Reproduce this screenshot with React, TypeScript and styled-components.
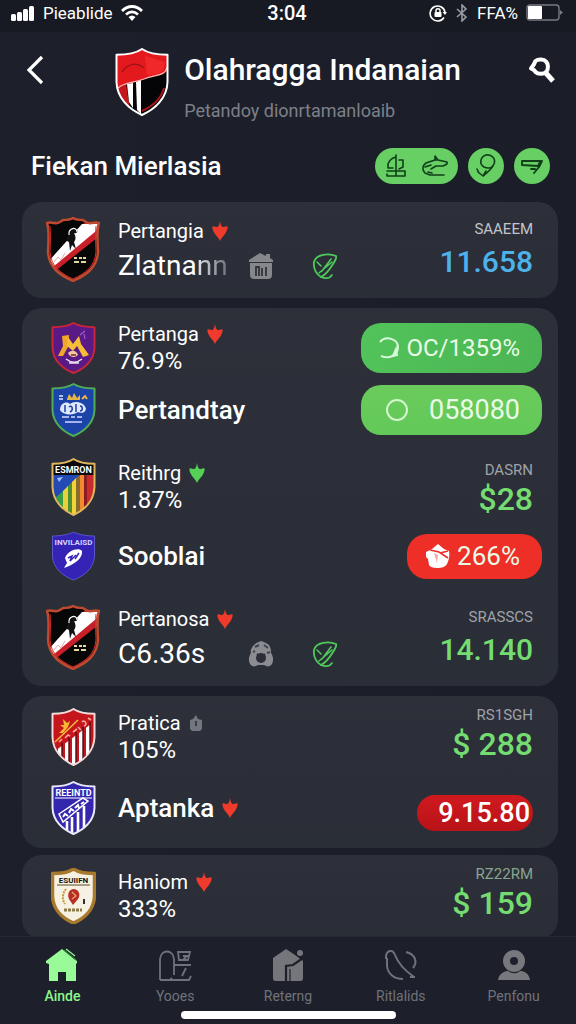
import React, { useId } from 'react';
import styled, { createGlobalStyle, css } from 'styled-components';

const GlobalStyle = createGlobalStyle`
  *, *::before, *::after { box-sizing: border-box; }
  body {
    margin: 0;
    background: #1c1f2a;
    color: #fff;
    font-family: Roboto, "Liberation Sans", sans-serif;
  }
  button { font: inherit; color: inherit; border: 0; padding: 0; background: none; cursor: pointer; }
  h1, h2, p { margin: 0; }
  svg { display: block; flex: none; }
`;

/* ---------- page frame ---------- */

const Screen = styled.div`
  display: flex;
  flex-direction: column;
  height: 100vh;
  background: linear-gradient(90deg, #1d202b, #1b1e28);
`;

const StatusBar = styled.div`
  display: grid;
  grid-template-columns: 1fr auto 1fr;
  align-items: center;
  height: 32px;
  padding: 0 13px 6px 11px;
  background: #171a23;
  font-size: 17px;
  line-height: 24px;
`;

const StatusGroup = styled.div<{ $end?: boolean }>`
  display: flex;
  align-items: center;
  gap: 8px;
  justify-content: ${(p) => (p.$end ? 'flex-end' : 'flex-start')};
`;

const Clock = styled.time`
  font-size: 20px;
  font-weight: 500;
`;

const Header = styled.header`
  display: flex;
  align-items: flex-start;
  padding: 16px 13px 24px;
`;

const HeaderButton = styled.button`
  display: flex;
  align-items: center;
  justify-content: center;
  width: 44px;
  height: 44px;
`;

const Brand = styled.div`
  display: flex;
  flex: 1;
  justify-content: center;
  gap: 15px;
`;

const Title = styled.h1`
  font-size: 30px;
  line-height: 44px;
  font-weight: 500;
  white-space: nowrap;
`;

const Subtitle = styled.p`
  padding-top: 6px;
  font-size: 18px;
  line-height: 26px;
  color: #7d8089;
  white-space: nowrap;
`;

const SectionBar = styled.div`
  display: flex;
  align-items: center;
  justify-content: space-between;
  height: 36px;
  margin: 0 26px 18px 31px;
`;

const SectionTitle = styled.h2`
  font-size: 26px;
  line-height: 36px;
  font-weight: 500;
`;

const Chips = styled.div`
  display: flex;
  gap: 10px;
`;

const Chip = styled.button<{ $wide?: boolean }>`
  display: flex;
  align-items: center;
  justify-content: center;
  gap: 14px;
  width: ${(p) => (p.$wide ? 83 : 36)}px;
  height: 36px;
  border-radius: 18px;
  background: #67cf63;
`;

/* ---------- cards ---------- */

const List = styled.main`
  flex: 1;
  min-height: 0;
  overflow-y: auto;
  scrollbar-width: none;
  display: flex;
  flex-direction: column;
  gap: 10px;
  padding: 0 18px 0 22px;
`;

const Card = styled.section<{ $compact?: boolean; $tight?: boolean }>`
  flex: none;
  padding: ${(p) => (p.$compact ? '12px 16px 14px 24px' : '14px 16px 16px 24px')};
  border-radius: 20px;
  background: linear-gradient(180deg, #2d2f39, #2a2e37);
  margin-top: ${(p) => (p.$tight ? -3 : 0)}px;
`;

const Row = styled.article<{ $height: number; $space?: number }>`
  display: grid;
  grid-template-columns: 54px 1fr auto;
  grid-template-rows: 100%;
  column-gap: 18px;
  align-items: center;
  height: ${(p) => p.$height}px;
  margin-top: ${(p) => p.$space ?? 0}px;
`;

const CrestCell = styled.div`
  display: flex;
  justify-content: center;
`;

const Info = styled.div<{ $loose?: boolean }>`
  display: flex;
  flex-direction: column;
  gap: ${(p) => (p.$loose ? 7 : 0)}px;
`;

const Line = styled.div`
  display: flex;
  align-items: center;
`;

const Label = styled.span`
  margin-right: 8px;
  font-size: 20px;
  line-height: 26px;
`;

const Figure = styled.span`
  font-size: 24px;
  line-height: 28px;
`;

const Name = styled.span`
  margin-right: 8px;
  font-size: 26px;
  line-height: 30px;
  font-weight: 500;
`;

const Score = styled.span`
  width: 129px;
  font-size: 28px;
  line-height: 30px;
`;

const Faded = styled.span`
  background: linear-gradient(90deg, #e4e5e8, #6b6e77);
  background-clip: text;
  color: transparent;
`;

const RowActions = styled.div`
  display: flex;
  gap: 36px;
`;

const IconButton = styled.button`
  display: flex;
  align-items: center;
  justify-content: center;
  width: 28px;
  height: 28px;
`;

type AmountKind = 'large' | 'plain' | 'raised';

const amountLift: Record<AmountKind, number> = { large: 2, plain: 0, raised: 10 };

const Amount = styled.div<{ $kind: AmountKind }>`
  display: flex;
  flex-direction: column;
  align-items: flex-end;
  gap: ${(p) => (p.$kind === 'large' ? 4 : 0)}px;
  padding: 0 9px ${(p) => amountLift[p.$kind]}px 0;
`;

const Code = styled.span<{ $tone?: string }>`
  font-size: 15px;
  line-height: 24px;
  color: ${(p) => p.$tone ?? '#a0a2a9'};
`;

const Value = styled.span<{ $blue?: boolean; $large?: boolean }>`
  font-size: ${(p) => (p.$large ? 30 : 32)}px;
  line-height: 34px;
  font-weight: 500;
  color: ${(p) => (p.$blue ? '#4db2ea' : '#74dc70')};
`;

const tones = {
  green: css`background: linear-gradient(100deg, #52c35a, #4bb553);`,
  lime: css`background: linear-gradient(180deg, #6acb5c, #62c958);`,
  red: css`background: #ee2f27;`,
};

const pillText = { green: 24, lime: 27, red: 26 };

const Pill = styled.button<{ $tone: keyof typeof tones; $small?: boolean }>`
  display: flex;
  align-items: center;
  justify-content: flex-end;
  gap: ${(p) => (p.$tone === 'lime' ? 20 : 6)}px;
  width: ${(p) => (p.$small ? 135 : 181)}px;
  height: ${(p) => (p.$small ? 45 : 50)}px;
  padding-right: 22px;
  border-radius: 20px;
  font-size: ${(p) => pillText[p.$tone]}px;
  color: #e9fbe6;
  ${(p) => tones[p.$tone]}
`;

const Tag = styled.button`
  width: 116px;
  height: 36px;
  margin: 10px 9px 0 0;
  padding-right: 3px;
  border-radius: 18px;
  background: linear-gradient(180deg, #d0191f, #b81318);
  font-size: 27px;
  line-height: 36px;
  font-weight: 500;
  text-align: right;
`;

/* ---------- bottom navigation ---------- */

const BottomNav = styled.nav`
  padding: 10px 6px 5px;
  background: #1d202b;
  border-top: 1px solid #252833;
`;

const Tabs = styled.div`
  display: grid;
  grid-template-columns: repeat(5, 1fr);
`;

const Tab = styled.a<{ $active?: boolean }>`
  display: flex;
  flex-direction: column;
  align-items: center;
  gap: 4px;
  font-size: 14px;
  line-height: 18px;
  text-decoration: none;
  font-weight: ${(p) => (p.$active ? 500 : 400)};
  color: ${(p) => (p.$active ? '#8df58a' : '#70727a')};
`;

const HomeIndicator = styled.div`
  width: 215px;
  height: 8px;
  margin: 6px auto 0;
  border-radius: 4px;
  background: #fff;
`;

/* ---------- crests ---------- */

const shield = (w: number, h: number) =>
  `M${w / 2} 1 C${w * 0.4} ${h * 0.07} ${w * 0.2} ${h * 0.1} 1.5 ${h * 0.1}` +
  ` L1.5 ${h * 0.5} C2 ${h * 0.74} ${w * 0.26} ${h * 0.9} ${w / 2} ${h - 1}` +
  ` C${w * 0.74} ${h * 0.9} ${w - 2} ${h * 0.74} ${w - 1.5} ${h * 0.5}` +
  ` L${w - 1.5} ${h * 0.1} C${w * 0.8} ${h * 0.1} ${w * 0.6} ${h * 0.07} ${w / 2} 1Z`;

const ornate =
  'M27 2 C24 4 20 4 17 4 C14 6 12 8 9 7 C6 7 4 6 1 7 C3 12 3 20 2 36 C3 52 14 59 27 65 C40 59 51 52 52 36 C51 20 51 12 53 7 C50 6 48 7 45 7 C42 8 40 6 37 4 C34 4 30 4 27 2Z';

interface CrestProps {
  w: number;
  h: number;
  edge: string;
  fill: string;
  path?: string;
  stroke?: number;
  children?: React.ReactNode;
}

function Crest({ w, h, edge, fill, path, stroke = 2, children }: CrestProps) {
  const id = useId();
  const d = path ?? shield(w, h);
  return (
    <svg width={w} height={h} viewBox={`0 0 ${w} ${h}`} aria-hidden="true">
      <clipPath id={id}>
        <path d={d} />
      </clipPath>
      <path d={d} fill={fill} />
      <g clipPath={`url(#${id})`}>{children}</g>
      <path d={d} fill="none" stroke={edge} strokeWidth={stroke} strokeLinejoin="round" />
    </svg>
  );
}

const LeagueCrest = () => (
  <Crest w={54} h={68} edge="#fff" fill="#050507">
    <path d="M0 0H54V21C48 30 38 26 27 32C18 36 8 34 0 42Z" fill="#e3191d" />
    <path d="M30 8L50 14L48 22C44 27 38 26 32 27Z" fill="#f0282a" />
    <path d="M7 24C13 15 22 14 29 20" fill="none" stroke="#a31216" strokeWidth="1.5" />
    <path d="M2 40L11 36L16 68L8 60Z" fill="#c5181c" />
    <path d="M12 36L18 35V60L14 54Z" fill="#fff" />
    <path d="M21 34L26 32V66L22 62Z" fill="#fff" />
    <path d="M3 40C9 34 19 35 29 31C40 26 50 29 52 19" fill="none" stroke="#ffb9b4" strokeWidth="1.2" />
    <path d="M27 63C38 58 46 51 49 40" fill="none" stroke="#a5161a" strokeWidth="2" />
  </Crest>
);

const StripeCrest = () => (
  <Crest w={54} h={66} edge="#c04a2f" fill="#080708" path={ornate} stroke={2.5}>
    <path d="M0 48L42 3L56 4V18L8 56Z" fill="#c81f28" />
    <path d="M2 46L36 8L52 8L50 15L7 51Z" fill="#fff" />
    <path d="M22 20C22 14 26 11 30 13C33 15 31 18 28 17C30 21 30 23 28 26L30 33L26 29L24 35L23 26C20 25 19 23 22 20Z" fill="#111" />
    <path d="M23 19C22 12 31 10 31 16" fill="none" stroke="#fff" strokeWidth="1.2" />
    <path d="M8 46L12 41L15 44L19 37" fill="none" stroke="#e9aaae" strokeWidth="1" />
    <path d="M28 42H31M33 42H36M37 42H40M28 46H33M35 46H40" stroke="#e5d9a0" strokeWidth="2" />
    <path d="M4 10C5 22 4 30 4 36C5 50 14 57 27 63C40 57 49 50 50 36C50 30 49 22 50 10" fill="none" stroke="#e02a2c" strokeWidth="1" />
  </Crest>
);

const PurpleCrest = () => (
  <Crest w={45} h={52} edge="#c9243a" fill="#5a1a85">
    <path d="M11 14L18 13L17 25L12 34L7 34L12 24Z" fill="#f0a72a" />
    <path d="M17 15L22 22L28 14L30 22L38 33L32 35L26 24L22 29L16 24Z" fill="#f6bd36" />
    <path d="M29 13L34 9M34 17L33 12" stroke="#a45ad0" strokeWidth="1.2" />
    <path d="M17 31C21 27 26 29 27 33C24 36 19 36 17 31Z" fill="#f3c7a0" />
    <path d="M15 37C20 41 26 41 31 37M18 41H28" fill="none" stroke="#e8ddf0" strokeWidth="1.5" />
    <path d="M20 33H25" stroke="#7a2430" strokeWidth="1.5" />
  </Crest>
);

const BlueCrest = () => (
  <Crest w={45} h={54} edge="#4fae55" fill="#1c43a8">
    <path d="M8 13H12M8 16H12" stroke="#dfe8ff" strokeWidth="1.6" />
    <path d="M16 16L18 11L21 15L23 10L26 15L29 12L29 17H16Z" fill="#e7b448" />
    <path d="M31 16L34 13L36 16" fill="none" stroke="#e7b448" strokeWidth="2" />
    <path d="M9 27C9 19 17 18 19 21C23 17 34 19 35 26C34 31 29 30 27 29C22 33 12 32 9 27Z" fill="#dfe7fb" />
    <path d="M14 22V29M18 24C21 21 23 27 19 29M25 21V29M29 23C32 23 32 28 29 28" fill="none" stroke="#1c43a8" strokeWidth="1.5" />
    <path d="M11 34H18M20 34H24M26 34H31M14 39H31" stroke="#cfdcff" strokeWidth="1.6" />
  </Crest>
);

const RainbowCrest = () => (
  <Crest w={45} h={58} edge="#e0b65c" fill="#c92c2c">
    <path d="M0 17H30L0 46Z" fill="#2349b4" />
    <path d="M0 44L12 33V60H0Z" fill="#3b9c48" />
    <path d="M12 33L17 28V60H12Z" fill="#e8d23c" />
    <path d="M17 28L21 24V60H17Z" fill="#4f8e34" />
    <path d="M21 24L25 20V60H21Z" fill="#f1d43a" />
    <path d="M25 20L29 17V60H25Z" fill="#8a6a2a" />
    <path d="M29 17H33V60H29Z" fill="#f08a2c" />
    <path d="M33 17H36V60H33Z" fill="#8b1c24" />
    <path d="M6 20L12 19L8 24Z" fill="#9fc0ff" />
    <path d="M0 0H45V17H0Z" fill="#0a0a0c" />
    <text x="22.5" y="15" textAnchor="middle" fontSize="9" fontWeight="700" fill="#fff">ESMRON</text>
  </Crest>
);

const IndigoCrest = () => (
  <Crest w={45} h={50} edge="#5a58c8" fill="#3423b4" stroke={1}>
    <text x="22.5" y="14" textAnchor="middle" fontSize="8" fontWeight="700" fill="#d6d4ff">INVILAISD</text>
    <path d="M14 27C17 19 28 16 31 20C32 27 24 33 13 37L16 32Z" fill="#fff" />
    <path d="M17 27L21 25L19 30L25 24M24 28L28 22" fill="none" stroke="#3423b4" strokeWidth="1.5" />
  </Crest>
);

const RedCrest = () => (
  <Crest w={45} h={58} edge="#f3dada" fill="#c5161d">
    {[7, 14, 21, 28, 35].map((x) => (
      <path key={x} d={`M${x} ${46 - x * 0.75}L${x + 4} ${43 - x * 0.75}V60H${x}Z`} fill="#fff" />
    ))}
    {[11, 18, 25, 32, 39].map((x) => (
      <path key={x} d={`M${x} ${43 - x * 0.75}V60`} stroke="#4a0c12" strokeWidth="1.4" />
    ))}
    <path d="M4 34L27 12" stroke="#f5bb3b" strokeWidth="1.5" />
    <path d="M8 25L13 20L9 17L13 17L12 11L16 15L19 13L17 19L12 25Z" fill="#f7b733" />
    <path d="M8 34L11 31M14 30L17 27L19 28M22 24L26 21M27 19L30 22M31 14C34 11 37 17 33 18M37 10L40 12" fill="none" stroke="#ffa39a" strokeWidth="1.6" />
  </Crest>
);

const NavyCrest = () => (
  <Crest w={45} h={54} edge="#e9e9fb" fill="#3427ae">
    <path d="M16 40V54M21 36V54M27 31V54M33 25V48" stroke="#fff" strokeWidth="2.6" />
    <path d="M8 33L32 17L37 20L12 41Z" fill="#3427ae" stroke="#fff" strokeWidth="1.5" />
    <path d="M12 36L14 33L17 35M18 32L20 28L23 30M24 27L27 24L28 27M30 23L33 21" fill="none" stroke="#fff" strokeWidth="2" />
    <path d="M4 17H41" stroke="#fff" strokeWidth="1.2" />
    <text x="22.5" y="15" textAnchor="middle" fontSize="9" fontWeight="700" fill="#fff">REEINTD</text>
  </Crest>
);

const GoldCrest = () => (
  <Crest w={45} h={56} edge="#a87a2d" fill="#f6f1e2" stroke={3.5}>
    <path d="M6 17H39" stroke="#5c4a28" strokeWidth="1.2" />
    <text x="22.5" y="15" textAnchor="middle" fontSize="8" fontWeight="700" fill="#151210">ESUIIFN</text>
    <path d="M22 21C28 21 30 27 27 31L22 37L18 31C16 26 18 22 22 21Z" fill="#b52f26" />
    <path d="M21 24L25 28L21 31" fill="none" stroke="#f1a36a" strokeWidth="1.2" />
    <path d="M15 21C11 26 11 32 14 36" fill="none" stroke="#c9963a" strokeWidth="2" strokeDasharray="2 1" />
    <path d="M33 31V36" stroke="#333" strokeWidth="2" />
    <path d="M13 42H31" stroke="#8c7a48" strokeWidth="3" strokeDasharray="3 1" />
  </Crest>
);

/* ---------- icons ---------- */

const Drop = ({ color = '#f03a2b' }: { color?: string }) => (
  <svg width="16" height="22" viewBox="0 0 16 22" aria-hidden="true">
    <path d="M8 1C8.500 4 9 6 10.500 7C12 7.500 14 5.500 15.500 6.500C16 8 15 11 13 14C11.500 16 9 18 8 21C7 18 4.500 16 3 14C1 11 0 8 .5 6.500C2 5.500 4 7.500 5.500 7C7 6 7.500 4 8 1Z" fill={color} />
  </svg>
);

const MiniCup = () => (
  <svg width="14" height="18" viewBox="0 0 14 18" aria-hidden="true">
    <path d="M1 6L4 5L7 1L9 5L13 6V15L11 17H3L1 15Z" fill="#73767f" />
    <path d="M6 7H8V12H6Z" fill="#3a3d46" />
  </svg>
);

const BasketIcon = () => (
  <svg width="26" height="28" viewBox="0 0 26 28" aria-hidden="true">
    <path d="M1 8L12 1L18 4V2H22V6L25 8V10H1Z" fill="#85878d" />
    <path d="M2 11H24V23C24 26 22 27 20 27H6C4 27 2 26 2 23Z" fill="#85878d" />
    <path d="M8 24V15H11V24M14 16V24M18 24V15" fill="none" stroke="#30333c" strokeWidth="1.800" />
  </svg>
);

const BallIcon = () => (
  <svg width="26" height="28" viewBox="0 0 26 28" aria-hidden="true">
    <path d="M6 5C9 2 11 2 13 1C16 2 19 3 21 5C23 8 23 11 23 13C25 16 26 20 24 24C22 27 19 27 16 25H10C7 27 4 27 2 24C0 20 1 16 3 13C2 10 4 7 6 5Z" fill="#8a8c92" />
    <path d="M7 7L11 5M16 5L20 8M5 12L7 11M19 13L22 12" stroke="#41444d" strokeWidth="2" />
    <circle cx="13" cy="18" r="5" fill="#2b2e38" />
    <path d="M9 14L11 16M17 14L15 16" stroke="#2b2e38" strokeWidth="2" />
  </svg>
);

const LeafIcon = () => (
  <svg width="26" height="26" viewBox="0 0 26 26" fill="none" stroke="#4fc95a" aria-hidden="true">
    <path d="M24 3C17 0 4 1 2 9C1 16 5 22 9 24C13 22 18 16 21 11C23 8 25 5 24 3Z" strokeWidth="1.800" />
    <path d="M10 18L19 6M7 20L20 9M5 9L9 13M9 24C14 26 18 25 20 22" strokeWidth="1.600" strokeLinecap="round" />
  </svg>
);

const BackIcon = () => (
  <svg width="20" height="32" viewBox="0 0 20 32" aria-hidden="true">
    <path d="M17 3L4 16L17 29" fill="none" stroke="#fff" strokeWidth="3.200" />
  </svg>
);

const SearchIcon = () => (
  <svg width="28" height="28" viewBox="0 0 28 28" fill="none" stroke="#fff" aria-hidden="true">
    <path d="M8.500 5C11 3 17 3 19 5.500C21.500 8 21.500 13 19.500 15.500C17 18.500 11 18.500 8.500 16L7 14L4 12.500L6.500 9Z" strokeWidth="4" strokeLinejoin="round" />
    <path d="M18 16L26 25" strokeWidth="5" />
  </svg>
);

const chipStroke = { fill: 'none', stroke: '#103f18', strokeWidth: 1.6, strokeLinecap: 'round', strokeLinejoin: 'round' } as const;

const ScaleIcon = () => (
  <svg width="22" height="24" viewBox="0 0 22 24" {...chipStroke} aria-hidden="true">
    <path d="M11 1V17M11 3C7 4 4 7 3 10V14H8M11 3V14M14 6H18V13L14 15M2 17H20M2 22H20V17M2 20V22M11 17V22" />
  </svg>
);

const WhistleIcon = () => (
  <svg width="28" height="24" viewBox="0 0 28 24" {...chipStroke} aria-hidden="true">
    <path d="M14 6L17 6L26 8V10L22 12L15 12L10 15M14 6L14 2L17 6M14 6L5 9C1 12 1 16 4 19L9 21H23M4 13L10 11M7 18L11 19" />
  </svg>
);

const RacketIcon = () => (
  <svg width="24" height="26" viewBox="0 0 24 26" {...chipStroke} aria-hidden="true">
    <path d="M10 14C5 11 6 4 12 2C18 1 22 6 20 11C18 15 14 16 10 14ZM20 11C18 16 13 20 9 23L4 19M3 16L5 20M9 23L12 18" />
  </svg>
);

const FlagIcon = () => (
  <svg width="24" height="20" viewBox="0 0 24 20" {...chipStroke} strokeWidth={1.9} aria-hidden="true">
    <path d="M2 5H22L19 11L14 17M2 5V9L18 10L20 6M11 13L15 13" />
  </svg>
);

const ArcIcon = () => (
  <svg width="22" height="24" viewBox="0 0 22 24" fill="none" stroke="#d8f7d8" strokeWidth="2" aria-hidden="true">
    <path d="M2 6C8 -1 20 3 20 11C20 18 12 24 3 20" />
    <path d="M18 13L15 20L19 19Z" fill="#d8f7d8" />
  </svg>
);

const RingIcon = () => (
  <svg width="24" height="24" viewBox="0 0 24 24" aria-hidden="true">
    <circle cx="12" cy="12" r="10" fill="none" stroke="#d3f6cd" strokeWidth="2" />
  </svg>
);

const GiftIcon = () => (
  <svg width="26" height="26" viewBox="0 0 26 26" aria-hidden="true">
    <path d="M7 6L13 1L19 6L24 8C25 12 24 17 22 21C20 24 17 25 12 25C8 25 5 24 4 22L3 16L1 14V9Z" fill="#fff" />
    <path d="M5 7L14 9L23 15M15 10L23 8" fill="none" stroke="#ee2f27" strokeWidth="1.600" />
    <path d="M9 10L13 12L12 20Z" fill="#f7a5a0" />
  </svg>
);

const SignalIcon = () => (
  <svg width="24" height="16" viewBox="0 0 24 16" fill="#fff" aria-hidden="true">
    <rect x="0" y="9" width="5" height="7" rx="1.500" />
    <rect x="6" y="7" width="5" height="9" rx="1.500" />
    <rect x="12" y="4" width="5" height="12" rx="1.500" />
    <rect x="18" y="1" width="5" height="15" rx="1.500" />
  </svg>
);

const WifiIcon = () => (
  <svg width="22" height="16" viewBox="0 0 22 16" fill="none" stroke="#fff" aria-hidden="true">
    <path d="M1 6C7 0 15 0 21 6" strokeWidth="2.800" />
    <path d="M5 9.500C9 6 13 6 17 9.500" strokeWidth="2.600" />
    <path d="M7.500 12C10 10 12 10 14.500 12L11 16Z" fill="#fff" stroke="none" />
  </svg>
);

const LockIcon = () => (
  <svg width="18" height="18" viewBox="0 0 18 18" fill="none" stroke="#fff" aria-hidden="true">
    <path d="M15 13.500A7.500 7.500 0 1 1 16 8" strokeWidth="1.600" />
    <path d="M13.500 8H18L16 11Z" fill="#fff" stroke="none" />
    <rect x="5.500" y="8" width="7" height="5" rx="1" fill="#fff" stroke="none" />
    <path d="M7 8V6.500C7 4 11 4 11 6.500V8" strokeWidth="1.500" />
  </svg>
);

const BluetoothIcon = () => (
  <svg width="14" height="18" viewBox="0 0 14 18" fill="none" stroke="#9a9ca3" strokeWidth="1.600" aria-hidden="true">
    <path d="M2 5L11 13L7 17V1L11 5L2 13" />
  </svg>
);

const BatteryIcon = () => (
  <svg width="37" height="18" viewBox="0 0 37 18" aria-hidden="true">
    <rect x="1" y="1" width="32" height="15" rx="3" fill="none" stroke="#777a82" strokeWidth="1.400" />
    <rect x="2" y="2" width="14" height="13" rx="1" fill="#fff" />
    <path d="M34 6L37 8.500L34 11Z" fill="#777a82" />
  </svg>
);

const HomeIcon = () => (
  <svg width="34" height="36" viewBox="0 0 34 36" aria-hidden="true">
    <path d="M17 2L22 6L32 14V16L31 17V34H21V25H13V34H4V17L1 16V14Z" fill="#98fb98" />
    <path d="M19 3L31 13" stroke="#2f7a3c" strokeWidth="1.200" />
    <path d="M21 2L30 9" stroke="#98fb98" strokeWidth="1.200" />
  </svg>
);

const GridIcon = () => (
  <svg width="34" height="36" viewBox="0 0 34 36" fill="none" stroke="#70727a" strokeWidth="1.800" aria-hidden="true">
    <path d="M2 33V12C3 2 15 2 16 12V28M2 33H31L33 29M16 18H33M20 5H32L30 13H21ZM25 9H29L25 13M28 21L24 29M12 33L14 31" />
  </svg>
);

const StoreIcon = () => (
  <svg width="34" height="36" viewBox="0 0 34 36" aria-hidden="true">
    <path d="M2 11L15 2L24 8L32 14V31C32 33 31 34 30 34H4C3 34 2 33 2 31Z" fill="#74767b" />
    <circle cx="29" cy="6" r="3" fill="#74767b" />
    <path d="M15 34V19L22 18L32 11" fill="none" stroke="#1d202b" strokeWidth="2.200" />
    <path d="M19 34V22" stroke="#1d202b" strokeWidth="1.200" />
  </svg>
);

const PhoneIcon = () => (
  <svg width="34" height="36" viewBox="0 0 34 36" fill="none" stroke="#70727a" strokeWidth="2" aria-hidden="true">
    <path d="M2 12V9C3 3 9 2 11 8C14 16 20 23 30 30M3 11V19C4 27 10 32 19 32M22 5C31 7 34 15 29 21M26 30L31 30" />
  </svg>
);

const ProfileIcon = () => (
  <svg width="34" height="36" viewBox="0 0 34 36" aria-hidden="true">
    <circle cx="17" cy="14" r="7.500" fill="none" stroke="#76787d" strokeWidth="7" />
    <path d="M1 33C2 26 8 24 11 24C15 27 20 27 23 24C27 24 32 26 33 33Z" fill="#76787d" />
  </svg>
);

const tabs = [
  { label: 'Ainde', icon: <HomeIcon />, active: true },
  { label: 'Yooes', icon: <GridIcon /> },
  { label: 'Reterng', icon: <StoreIcon /> },
  { label: 'Ritlalids', icon: <PhoneIcon /> },
  { label: 'Penfonu', icon: <ProfileIcon /> },
];

interface TeamRowProps {
  height: number;
  space?: number;
  crest: React.ReactNode;
  loose?: boolean;
  children: React.ReactNode;
  side: React.ReactNode;
}

const TeamRow = ({ height, space, crest, loose, children, side }: TeamRowProps) => (
  <Row $height={height} $space={space}>
    <CrestCell>{crest}</CrestCell>
    <Info $loose={loose}>{children}</Info>
    {side}
  </Row>
);

interface AmountBlockProps {
  code: string;
  value: string;
  kind: AmountKind;
  blue?: boolean;
  tone?: string;
}

const AmountBlock = ({ code, value, kind, blue, tone }: AmountBlockProps) => (
  <Amount $kind={kind}>
    <Code $tone={tone}>{code}</Code>
    <Value $blue={blue} $large={kind === 'large'}>{value}</Value>
  </Amount>
);

export default function App() {
  return (
    <Screen>
      <GlobalStyle />
      <StatusBar>
        <StatusGroup>
          <SignalIcon />
          <span>Pieablide</span>
          <WifiIcon />
        </StatusGroup>
        <Clock>3:04</Clock>
        <StatusGroup $end>
          <LockIcon />
          <BluetoothIcon />
          <span>FFA%</span>
          <BatteryIcon />
        </StatusGroup>
      </StatusBar>

      <Header>
        <HeaderButton aria-label="Back"><BackIcon /></HeaderButton>
        <Brand>
          <LeagueCrest />
          <div>
            <Title>Olahragga Indanaian</Title>
            <Subtitle>Petandoy dionrtamanloaib</Subtitle>
          </div>
        </Brand>
        <HeaderButton aria-label="Search"><SearchIcon /></HeaderButton>
      </Header>

      <SectionBar>
        <SectionTitle>Fiekan Mierlasia</SectionTitle>
        <Chips>
          <Chip $wide aria-label="Matches"><ScaleIcon /><WhistleIcon /></Chip>
          <Chip aria-label="Racket"><RacketIcon /></Chip>
          <Chip aria-label="Flag"><FlagIcon /></Chip>
        </Chips>
      </SectionBar>

      <List>
        <Card>
          <TeamRow height={66} loose crest={<StripeCrest />} side={<AmountBlock code="SAAEEM" value="11.658" kind="large" blue tone="#c3c5ca" />}>
            <Line><Label>Pertangia</Label><Drop /></Line>
            <Line>
              <Score>Zlatna<Faded>nn</Faded></Score>
              <RowActions>
                <IconButton aria-label="Basket"><BasketIcon /></IconButton>
                <IconButton aria-label="Leaf"><LeafIcon /></IconButton>
              </RowActions>
            </Line>
          </TeamRow>
        </Card>

        <Card>
          <TeamRow height={52} crest={<PurpleCrest />} side={<Pill $tone="green"><ArcIcon />OC/1359%</Pill>}>
            <Line><Label>Pertanga</Label><Drop /></Line>
            <Figure>76.9%</Figure>
          </TeamRow>
          <TeamRow height={52} space={10} crest={<BlueCrest />} side={<Pill $tone="lime"><RingIcon />058080</Pill>}>
            <Name>Pertandtay</Name>
          </TeamRow>
          <TeamRow height={58} space={22} crest={<RainbowCrest />} side={<AmountBlock code="DASRN" value="$28" kind="plain" />}>
            <Line><Label>Reithrg</Label><Drop color="#55cf55" /></Line>
            <Figure>1.87%</Figure>
          </TeamRow>
          <TeamRow height={48} space={16} crest={<IndigoCrest />} side={<Pill $tone="red" $small><GiftIcon />266%</Pill>}>
            <Name>Sooblai</Name>
          </TeamRow>
          <TeamRow height={66} space={24} loose crest={<StripeCrest />} side={<AmountBlock code="SRASSCS" value="14.140" kind="large" />}>
            <Line><Label>Pertanosa</Label><Drop /></Line>
            <Line>
              <Score>C6.36s</Score>
              <RowActions>
                <IconButton aria-label="Ball"><BallIcon /></IconButton>
                <IconButton aria-label="Leaf"><LeafIcon /></IconButton>
              </RowActions>
            </Line>
          </TeamRow>
        </Card>

        <Card $compact>
          <TeamRow height={58} crest={<RedCrest />} side={<AmountBlock code="RS1SGH" value="$ 288" kind="raised" />}>
            <Line><Label>Pratica</Label><MiniCup /></Line>
            <Figure>105%</Figure>
          </TeamRow>
          <TeamRow height={52} space={16} crest={<NavyCrest />} side={<Tag>9.15.80</Tag>}>
            <Line><Name>Aptanka</Name><Drop /></Line>
          </TeamRow>
        </Card>

        <Card $compact $tight>
          <TeamRow height={58} crest={<GoldCrest />} side={<AmountBlock code="RZ22RM" value="$ 159" kind="raised" tone="#87a58f" />}>
            <Line><Label>Haniom</Label><Drop /></Line>
            <Figure>333%</Figure>
          </TeamRow>
        </Card>
      </List>

      <BottomNav>
        <Tabs>
          {tabs.map((t) => (
            <Tab key={t.label} href="#" $active={t.active}>
              {t.icon}
              {t.label}
            </Tab>
          ))}
        </Tabs>
        <HomeIndicator />
      </BottomNav>
    </Screen>
  );
}
